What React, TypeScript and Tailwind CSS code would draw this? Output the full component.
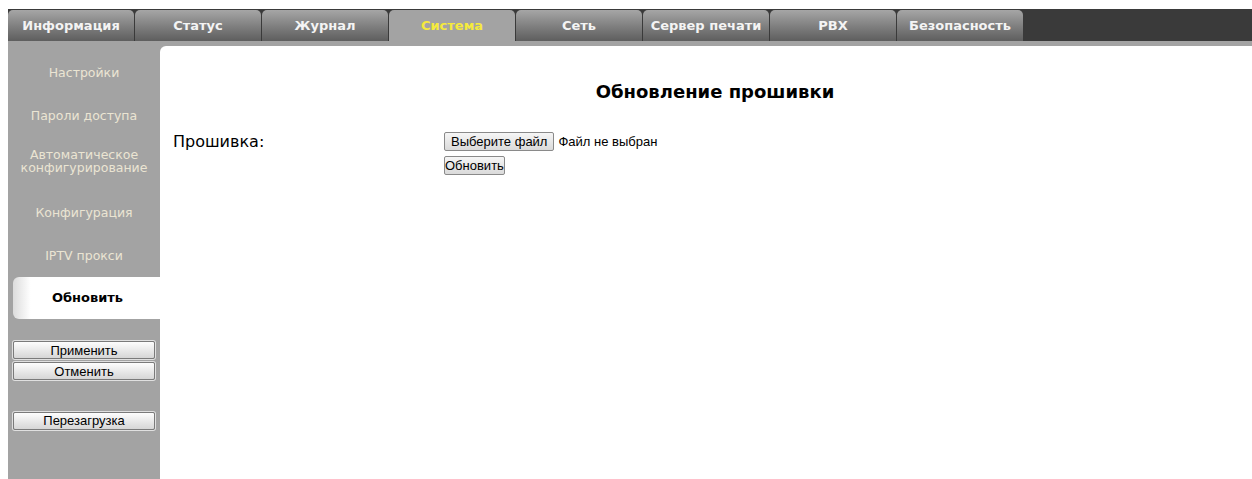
import React from "react";

const tabs = [
  "Информация",
  "Статус",
  "Журнал",
  "Система",
  "Сеть",
  "Сервер печати",
  "PBX",
  "Безопасность",
];

function Tab({ label, active }: { label: string; active: boolean }) {
  return (
    <div
      className={
        "w-[126px] h-[31px] rounded-t-[5px] flex items-center justify-center text-[13px] font-bold " +
        (active
          ? "bg-[#a3a3a3] text-[#f5ea3c]"
          : "bg-gradient-to-b from-[#a6a6a6] to-[#5e5e5e] text-[#f4f4f4]")
      }
    >
      {label}
    </div>
  );
}

function SideButton({ label }: { label: string }) {
  return (
    <button className="w-[142px] h-[18px] border border-[#7a7a7a] rounded-[2px] bg-gradient-to-b from-[#fdfdfd] to-[#d6d6d6] text-[13px] leading-none text-black font-['Liberation_Sans',Arial,sans-serif] shadow-[0_0_0_1px_#e0e0e0]">
      {label}
    </button>
  );
}

function MenuItem({ label, tall }: { label: React.ReactNode; tall?: boolean }) {
  return (
    <div
      className={
        "flex items-center justify-center text-center text-[12.5px] leading-[13px] text-[#ebe5d3] " +
        (tall ? "h-[54px] pb-[6px]" : "h-[43px]")
      }
    >
      {label}
    </div>
  );
}

export default function App() {
  return (
    <div className="w-[1252px] h-[479px] bg-white font-['DejaVu_Sans',Verdana,sans-serif] overflow-hidden">
      <div className="pt-[9px] pl-[8px]">
        {/* top navigation */}
        <div className="h-[32px] bg-[#3a3a3a] pt-[1px] flex gap-px">
          {tabs.map((t) => (
            <Tab key={t} label={t} active={t === "Система"} />
          ))}
        </div>

        <div className="flex bg-[#a3a3a3] h-[438px]">
          {/* left menu */}
          <div className="w-[152px] pt-[10px] flex flex-col">
            <MenuItem label="Настройки" />
            <MenuItem label="Пароли доступа" />
            <MenuItem
              tall
              label={
                <span>
                  Автоматическое
                  <br />
                  конфигурирование
                </span>
              }
            />
            <MenuItem label="Конфигурация" />
            <MenuItem label="IPTV прокси" />
            <div className="ml-[5px] h-[42px] rounded-l-[6px] bg-gradient-to-r from-[#dcdcdc] via-white via-[12%] to-white flex items-center justify-center text-[13px] font-bold text-black pl-[2px]">
              Обновить
            </div>
            <div className="pl-[5px] pt-[22px] flex flex-col gap-[3px]">
              <SideButton label="Применить" />
              <SideButton label="Отменить" />
            </div>
            <div className="pl-[5px] pt-[28px]">
              <SideButton label="Перезагрузка" />
            </div>
          </div>

          {/* main panel */}
          <div className="flex-1 mt-[5px] bg-white rounded-tl-[6px]">
            <div className="pt-[32px] pl-[18px] text-center text-[18px] font-bold text-black">
              Обновление прошивки
            </div>
            <div className="flex pt-[27px] pl-[13px]">
              <div className="w-[271px] text-[16px] text-black leading-[20px]">
                Прошивка:
              </div>
              <div className="flex flex-col gap-[4px] font-['Liberation_Sans',Arial,sans-serif] text-[13px] text-black">
                <div className="flex items-center gap-[4px]">
                  <button className="h-[19px] px-[6px] border border-[#8a8a8a] rounded-[2px] bg-gradient-to-b from-[#f6f6f6] to-[#dadada] text-[13px] leading-none">
                    Выберите файл
                  </button>
                  <span>Файл не выбран</span>
                </div>
                <div>
                  <button className="h-[19px] px-0 border border-[#8a8a8a] rounded-[2px] bg-gradient-to-b from-[#f6f6f6] to-[#dadada] text-[13px] leading-none">
                    Обновить
                  </button>
                </div>
              </div>
            </div>
          </div>
        </div>
      </div>
    </div>
  );
}
